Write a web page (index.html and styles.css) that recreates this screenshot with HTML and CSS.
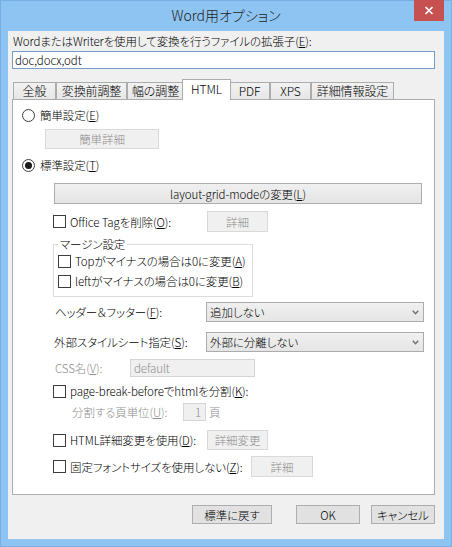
FILE: index.html
```html
<!DOCTYPE html>
<html lang="ja">
<head>
<meta charset="utf-8">
<title>Word用オプション</title>
<link rel="stylesheet" href="styles.css">
</head>
<body>
<div class="window">
  <div class="titlebar">
    <span class="title">Word用オプション</span>
    <span class="close"><svg width="10" height="9" viewBox="0 0 10 9"><path d="M1.5 1 L8.5 8 M8.5 1 L1.5 8" stroke="#fff" stroke-width="1.7" fill="none"/></svg></span>
  </div>
  <div class="client">
    <div class="ext-label">WordまたはWriterを使用して変換を行うファイルの拡張子(<u>E</u>):</div>
    <div class="ext-input">doc,docx,odt</div>
    <div class="tabs">
      <div class="tab t-general">全般</div>
      <div class="tab t-pre">変換前調整</div>
      <div class="tab t-width">幅の調整</div>
      <div class="tab t-html active">HTML</div>
      <div class="tab t-pdf">PDF</div>
      <div class="tab t-xps">XPS</div>
      <div class="tab t-detail">詳細情報設定</div>
    </div>
    <div class="panel">
      <div class="row row-a radio-row"><span class="radio"></span><span>簡単設定(<u>E</u>)</span></div>
      <div class="btn disabled btn-easy">簡単詳細</div>
      <div class="row row-c radio-row"><span class="radio checked"></span><span>標準設定(<u>T</u>)</span></div>
      <div class="btn btn-layout">layout-grid-modeの変更(<u>L</u>)</div>
      <div class="row row-e check-row">
        <span class="check-item item-office"><span class="checkbox"></span><span>Office Tagを削除(<u>O</u>):</span></span>
        <span class="btn disabled btn-small btn-office">詳細</span>
      </div>
      <div class="group">
        <span class="group-title">マージン設定</span>
        <div class="row group-row"><span class="checkbox"></span><span>Topがマイナスの場合は0に変更(<u>A</u>)</span></div>
        <div class="row group-row"><span class="checkbox"></span><span>leftがマイナスの場合は0に変更(<u>B</u>)</span></div>
      </div>
      <div class="row row-g field-row">
        <span class="field-label label-select">ヘッダー＆フッター(<u>F</u>):</span>
        <span class="select"><span>追加しない</span><svg width="7" height="5" viewBox="0 0 7 5"><path d="M0.8 0.8 L3.5 3.8 L6.2 0.8" stroke="#6f6f6f" stroke-width="1.4" fill="none"/></svg></span>
      </div>
      <div class="row row-h field-row field-row-wide">
        <span class="field-label label-select-wide">外部スタイルシート指定(<u>S</u>):</span>
        <span class="select"><span>外部に分離しない</span><svg width="7" height="5" viewBox="0 0 7 5"><path d="M0.8 0.8 L3.5 3.8 L6.2 0.8" stroke="#6f6f6f" stroke-width="1.4" fill="none"/></svg></span>
      </div>
      <div class="row row-i field-row">
        <span class="field-label label-css gray">CSS名(<u>V</u>):</span>
        <span class="text-box box-css">default</span>
      </div>
      <div class="row row-j check-row">
        <span class="check-item"><span class="checkbox"></span><span>page-break-beforeでhtmlを分割(<u>K</u>):</span></span>
      </div>
      <div class="row row-k split-row">
        <span class="field-label label-split gray">分割する頁単位(<u>U</u>):</span>
        <span class="text-box box-num">1</span>
        <span class="unit">頁</span>
      </div>
      <div class="row row-l check-row">
        <span class="check-item item-htmldetail"><span class="checkbox"></span><span>HTML詳細変更を使用(<u>D</u>):</span></span>
        <span class="btn disabled btn-small">詳細変更</span>
      </div>
      <div class="row row-m check-row">
        <span class="check-item item-font"><span class="checkbox"></span><span>固定フォントサイズを使用しない(<u>Z</u>):</span></span>
        <span class="btn disabled btn-small btn-font">詳細</span>
      </div>
    </div>
    <div class="footer">
      <span class="btn btn-reset">標準に戻す</span>
      <span class="btn btn-ok">OK</span>
      <span class="btn btn-cancel">キャンセル</span>
    </div>
  </div>
</div>
</body>
</html>
```
FILE: styles.css
```css
* { box-sizing: border-box; }

body {
  margin: 0;
  font-family: "Noto Sans CJK JP", "Noto Sans", sans-serif;
  font-size: 11.5px;
  font-weight: 300;
  letter-spacing: -0.1px;
  font-feature-settings: "palt";
  color: #000;
  background: #8ec4f1;
}

u { text-decoration: underline; text-underline-offset: 1px; }

.window {
  width: 452px;
  height: 547px;
  background: #8ec4f1;
  box-shadow: inset 0 0 0 1px #74b0e4;
  display: flex;
  flex-direction: column;
}

.titlebar {
  height: 31px;
  position: relative;
  text-align: center;
}

.title {
  font-size: 14px;
  line-height: 30px;
  color: #222;
  letter-spacing: 0;
}

.close {
  position: absolute;
  top: 0;
  right: 8px;
  width: 30px;
  height: 21px;
  background: #c75050;
  display: flex;
  align-items: center;
  justify-content: center;
}

.client {
  flex: 1;
  margin: 0 8px 8px;
  background: #f0f0f0;
  padding: 3px 9px 0 4px;
  display: flex;
  flex-direction: column;
}

.ext-label {
  height: 15px;
  line-height: 15px;
  padding-left: 1px;
  white-space: nowrap;
}

.ext-input {
  margin-top: 2px;
  height: 18px;
  border: 1px solid #7a9cc4;
  background: #fff;
  line-height: 16px;
  padding-left: 2px;
}

.tabs {
  margin-top: 10px;
  height: 20px;
  display: flex;
  align-items: flex-end;
  padding-left: 1px;
  position: relative;
  z-index: 1;
}

.tab {
  height: 17px;
  border: 1px solid #acacac;
  border-bottom: none;
  background: linear-gradient(#f2f2f2, #e6e6e6);
  text-align: center;
  line-height: 15px;
  white-space: nowrap;
  font-size: 12px;
}

.t-general { width: 43px; }
.t-pre { width: 71px; }
.t-width { width: 57px; }
.t-html { width: 45px; }
.t-pdf { width: 41px; }
.t-xps { width: 41px; }
.t-detail { width: 83px; }

.tab.active {
  width: 49px;
  height: 21px;
  margin: 0 -2px -1px;
  background: #fff;
  line-height: 17px;
  position: relative;
  z-index: 2;
}

.panel {
  height: 396px;
  border: 1px solid #adadad;
  background: #fff;
  padding-top: 5px;
  display: flex;
  flex-direction: column;
}

.row {
  display: flex;
  align-items: center;
  height: 20px;
  white-space: nowrap;
}

.radio-row { padding-left: 9px; gap: 5px; }
.check-row { padding-left: 40px; }
.field-row { padding-left: 42px; }
.field-row-wide { padding-left: 41px; }

.row-c { margin-top: 6px; }
.row-e { margin-top: 7px; height: 21px; }
.row-g { margin-top: 5px; }
.row-h { margin-top: 10px; }
.row-i { margin-top: 7px; height: 18px; padding-left: 42px; }
.row-j { margin-top: 4px; }
.row-k { margin-top: 2px; height: 18px; padding-left: 59px; }
.row-l { margin-top: 9px; }
.row-m { margin-top: 6px; height: 21px; }

.radio {
  width: 13px;
  height: 13px;
  border: 1px solid #3c3c3c;
  border-radius: 50%;
  background: #fff;
  display: flex;
  align-items: center;
  justify-content: center;
  flex: none;
}

.radio.checked::after {
  content: "";
  width: 7px;
  height: 7px;
  border-radius: 50%;
  background: #1a1a1a;
}

.checkbox {
  width: 13px;
  height: 13px;
  border: 1px solid #3c3c3c;
  background: #fff;
  flex: none;
  margin-right: 4px;
}

.check-item {
  display: flex;
  align-items: center;
  flex: none;
}

.item-office { width: 154px; }
.item-htmldetail { width: 154px; }
.item-font { width: 198px; }

.btn {
  display: flex;
  align-items: center;
  justify-content: center;
  border: 1px solid #acacac;
  background: linear-gradient(#f0f0f0, #e5e5e5);
  white-space: nowrap;
  flex: none;
}

.btn.disabled {
  border-color: #d9d9d9;
  background: #f0f0f0;
  color: #8d8d8d;
}

.btn-easy {
  margin: 4px 0 0 32px;
  width: 114px;
  height: 20px;
}

.btn-layout {
  margin: 8px 0 0 41px;
  width: 368px;
  height: 21px;
}

.btn-small {
  width: 61px;
  height: 20px;
}

.btn-office { height: 21px; }
.btn-font { width: 62px; height: 21px; }

.group {
  position: relative;
  margin: 12px 0 0 40px;
  width: 200px;
  height: 53px;
  border: 1px solid #dcdcdc;
  padding: 6px 0 0 4px;
}

.group-title {
  position: absolute;
  top: -8px;
  left: 4px;
  padding: 0 2px;
  line-height: 15px;
  background: #fff;
}

.field-label {
  flex: none;
}

.label-select { width: 151px; }
.label-select-wide { width: 152px; }
.label-css { width: 75px; }
.label-split { width: 111px; }

.gray { color: #8d8d8d; }

.select {
  width: 218px;
  height: 20px;
  border: 1px solid #acacac;
  background: linear-gradient(#f0f0f0, #e5e5e5);
  display: flex;
  align-items: center;
  justify-content: space-between;
  padding: 0 4px 0 3px;
}

.text-box {
  height: 18px;
  border: 1px solid #d5d5d5;
  background: #f0f0f0;
  color: #8d8d8d;
  line-height: 16px;
  flex: none;
}

.box-css {
  width: 125px;
  padding-left: 3px;
}

.box-num {
  width: 23px;
  text-align: right;
  padding-right: 4px;
}

.unit {
  margin-left: 3px;
  color: #8d8d8d;
}

.footer {
  margin-top: 10px;
  display: flex;
  justify-content: flex-end;
}

.footer .btn {
  height: 19px;
  background: #e1e1e1;
  border-color: #adadad;
}

.btn-reset { width: 80px; margin-right: 24px; }
.btn-ok { width: 64px; margin-right: 11px; }
.btn-cancel { width: 64px; }
```
